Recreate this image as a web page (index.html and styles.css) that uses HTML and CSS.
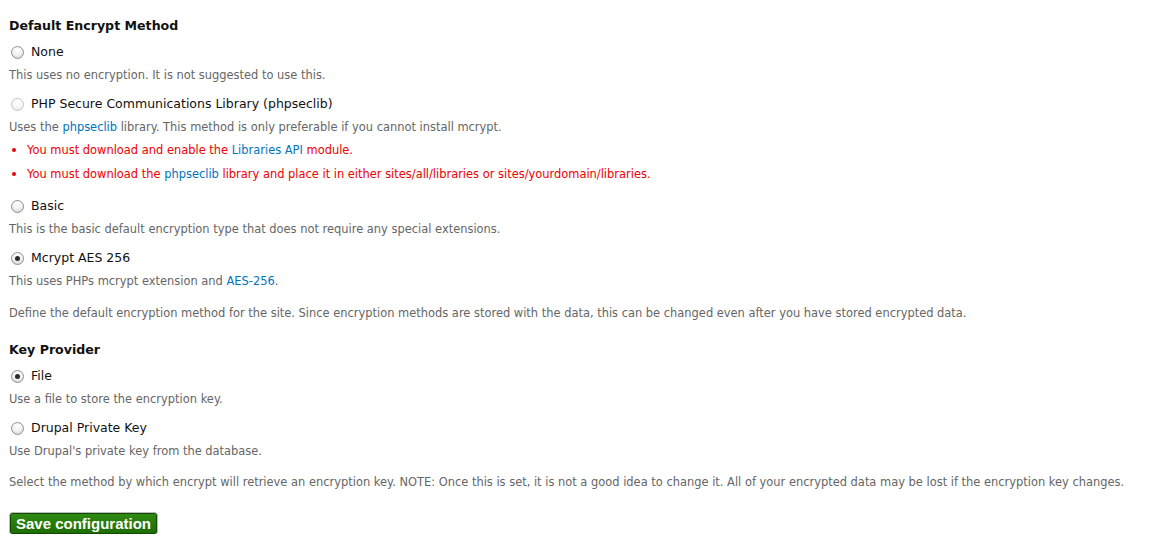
FILE: index.html
```html
<!DOCTYPE html>
<html>
<head>
<meta charset="utf-8">
<link rel="stylesheet" href="styles.css">
</head>
<body>
<form class="form">
  <fieldset class="group">
    <div class="group-title">Default Encrypt Method</div>
    <div class="option">
      <label class="radio-label"><span class="radio"></span>None</label>
      <div class="desc">This uses no encryption. It is not suggested to use this.</div>
    </div>
    <div class="option">
      <label class="radio-label"><span class="radio radio-disabled"></span>PHP Secure Communications Library (phpseclib)</label>
      <div class="desc">Uses the <a href="#">phpseclib</a> library. This method is only preferable if you cannot install mcrypt.</div>
      <ul class="errors">
        <li>You must download and enable the <a href="#">Libraries API</a> module.</li>
        <li>You must download the <a href="#">phpseclib</a> library and place it in either sites/all/libraries or sites/yourdomain/libraries.</li>
      </ul>
    </div>
    <div class="option">
      <label class="radio-label"><span class="radio"></span>Basic</label>
      <div class="desc">This is the basic default encryption type that does not require any special extensions.</div>
    </div>
    <div class="option">
      <label class="radio-label"><span class="radio radio-checked"></span>Mcrypt AES 256</label>
      <div class="desc">This uses PHPs mcrypt extension and <a href="#">AES-256</a>.</div>
    </div>
    <div class="desc group-desc">Define the default encryption method for the site. Since encryption methods are stored with the data, this can be changed even after you have stored encrypted data.</div>
  </fieldset>
  <fieldset class="group group-key">
    <div class="group-title">Key Provider</div>
    <div class="option">
      <label class="radio-label"><span class="radio radio-checked"></span>File</label>
      <div class="desc">Use a file to store the encryption key.</div>
    </div>
    <div class="option">
      <label class="radio-label"><span class="radio"></span>Drupal Private Key</label>
      <div class="desc">Use Drupal's private key from the database.</div>
    </div>
    <div class="desc group-desc">Select the method by which encrypt will retrieve an encryption key. NOTE: Once this is set, it is not a good idea to change it. All of your encrypted data may be lost if the encryption key changes.</div>
  </fieldset>
  <div class="actions">
    <button type="button" class="btn-save">Save configuration</button>
  </div>
</form>
</body>
</html>
```

FILE: styles.css
```css
html, body {
  margin: 0;
  padding: 0;
  background: #fff;
}
body {
  font-family: "DejaVu Sans", "Liberation Sans", sans-serif;
  color: #222;
}
.form {
  padding: 17px 9px 0 9px;
}
.group {
  border: 0;
  margin: 0;
  padding: 0;
}
.group-key {
  margin-top: 20px;
}
.group-title {
  font-size: 12.6px;
  font-weight: bold;
  line-height: 18px;
  color: #111;
  margin-bottom: 8px;
}
.option {
  margin-bottom: 12px;
}
.radio-label {
  display: flex;
  align-items: center;
  gap: 7px;
  font-size: 12.5px;
  line-height: 18px;
  color: #111;
  padding-left: 2px;
}
.radio {
  width: 13px;
  height: 13px;
  border-radius: 50%;
  box-sizing: border-box;
  border: 1px solid #8d8d8d;
  background: radial-gradient(circle at 50% 30%, #ffffff 0%, #f2f2f2 45%, #cfcfcf 100%);
  box-shadow: inset 0 1px 1px rgba(255,255,255,0.8);
  display: flex;
  align-items: center;
  justify-content: center;
  flex: none;
}
.radio-disabled {
  border-color: #c4c4c4;
  background: radial-gradient(circle at 50% 30%, #ffffff 0%, #f7f7f7 50%, #e2e2e2 100%);
}
.radio-checked::after {
  content: "";
  width: 5px;
  height: 5px;
  border-radius: 50%;
  background: #2b2b2b;
}
.desc {
  font-size: 11.45px;
  line-height: 16px;
  color: #666;
  margin-top: 6px;
}
.desc a, .errors a {
  color: #0074bd;
  text-decoration: none;
}
.errors {
  list-style: none;
  margin: 7px 0 0 0;
  padding: 0;
}
.errors li {
  position: relative;
  font-size: 11.45px;
  line-height: 16px;
  color: #ee0000;
  padding-left: 18px;
  margin-bottom: 8px;
}
.errors li::before {
  content: "";
  position: absolute;
  left: 3px;
  top: 6px;
  width: 4px;
  height: 4px;
  border-radius: 50%;
  background: #ee0000;
}
.errors li:last-child {
  margin-bottom: 15px;
}
.group-desc {
  margin-top: 16px;
}
.group-key .group-desc {
  margin-top: 15px;
}
.actions {
  margin-top: 23px;
}
.btn-save {
  font-family: "Liberation Sans", Arial, sans-serif;
  font-weight: bold;
  font-size: 15px;
  color: #fff;
  background: linear-gradient(#2f8a12, #1d6d05);
  border: 1px solid #0f4a00;
  outline: 1px solid #bdbdbd;
  outline-offset: 0;
  border-radius: 2px;
  padding: 0 5px;
  height: 21px;
  line-height: 19px;
  margin-left: 1px;
  cursor: pointer;
}
```
